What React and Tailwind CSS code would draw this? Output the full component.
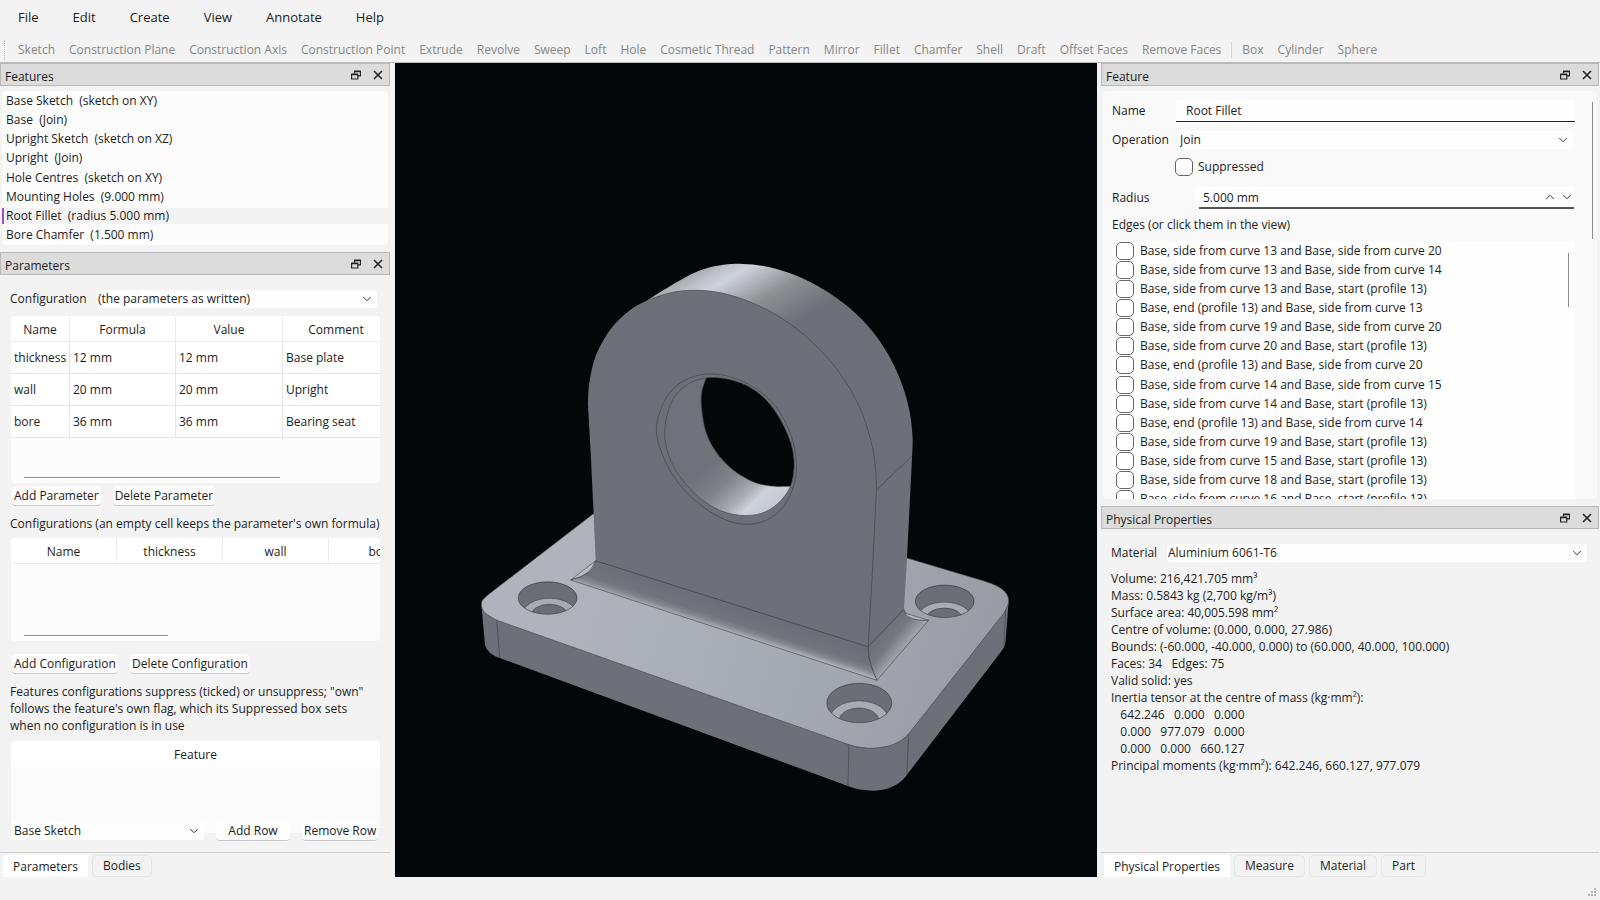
import React, { useId, useState } from "react";
import { ChevronDown, ChevronUp } from "lucide-react";

const MENUS = ["File", "Edit", "Create", "View", "Annotate", "Help"];

const TOOLS = [
  "Sketch", "Construction Plane", "Construction Axis", "Construction Point", "Extrude", "Revolve",
  "Sweep", "Loft", "Hole", "Cosmetic Thread", "Pattern", "Mirror", "Fillet", "Chamfer", "Shell",
  "Draft", "Offset Faces", "Remove Faces",
];
const PRIMITIVES = ["Box", "Cylinder", "Sphere"];

const FEATURES = [
  ["Base Sketch", "(sketch on XY)"],
  ["Base", "(Join)"],
  ["Upright Sketch", "(sketch on XZ)"],
  ["Upright", "(Join)"],
  ["Hole Centres", "(sketch on XY)"],
  ["Mounting Holes", "(9.000 mm)"],
  ["Root Fillet", "(radius 5.000 mm)"],
  ["Bore Chamfer", "(1.500 mm)"],
];

const PARAMETERS = [
  ["thickness", "12 mm", "12 mm", "Base plate"],
  ["wall", "20 mm", "20 mm", "Upright"],
  ["bore", "36 mm", "36 mm", "Bearing seat"],
];

const EDGES = [
  "Base, side from curve 13 and Base, side from curve 20",
  "Base, side from curve 13 and Base, side from curve 14",
  "Base, side from curve 13 and Base, start (profile 13)",
  "Base, end (profile 13) and Base, side from curve 13",
  "Base, side from curve 19 and Base, side from curve 20",
  "Base, side from curve 20 and Base, start (profile 13)",
  "Base, end (profile 13) and Base, side from curve 20",
  "Base, side from curve 14 and Base, side from curve 15",
  "Base, side from curve 14 and Base, start (profile 13)",
  "Base, end (profile 13) and Base, side from curve 14",
  "Base, side from curve 19 and Base, start (profile 13)",
  "Base, side from curve 15 and Base, start (profile 13)",
  "Base, side from curve 18 and Base, start (profile 13)",
  "Base, side from curve 16 and Base, start (profile 13)",
];

const PROPERTIES = `Volume: 216,421.705 mm³
Mass: 0.5843 kg (2,700 kg/m³)
Surface area: 40,005.598 mm²
Centre of volume: (0.000, 0.000, 27.986)
Bounds: (-60.000, -40.000, 0.000) to (60.000, 40.000, 100.000)
Faces: 34   Edges: 75
Valid solid: yes
Inertia tensor at the centre of mass (kg·mm²):
   642.246   0.000   0.000
   0.000   977.079   0.000
   0.000   0.000   660.127
Principal moments (kg·mm²): 642.246, 660.127, 977.079`;

/* ---------- 3D view ---------- */

// Catmull-Rom spline through the points, written as cubic segments
const curve = (pts, closed = false) => {
  const n = pts.length;
  const at = (i) => (closed ? pts[(i + n) % n] : pts[Math.max(0, Math.min(n - 1, i))]);
  let d = "";
  for (let i = 0; i < (closed ? n : n - 1); i++) {
    const [a, b, c, e] = [at(i - 1), at(i), at(i + 1), at(i + 2)];
    d += ` C${b[0] + (c[0] - a[0]) / 6} ${b[1] + (c[1] - a[1]) / 6} ${c[0] - (e[0] - b[0]) / 6} ${c[1] - (e[1] - b[1]) / 6} ${c[0]} ${c[1]}`;
  }
  return d;
};
const start = (p) => `M${p[0]} ${p[1]}`;

const FRONT_ARC = [
  [588, 405], [589.3, 383.3], [595.7, 356], [610, 330], [627.9, 311.7], [647.5, 300.2], [670.7, 292.7],
  [693.9, 290.3], [720.7, 292.8], [751, 302.3], [781.4, 318], [811.8, 341.7], [838.6, 371.5],
  [859, 406], [870.7, 440], [875.4, 466.7], [876.4, 490],
];
const BACK_ARC = [
  [647.5, 300.2], [660, 292.3], [677.9, 281.5], [693.9, 273], [710, 267.3], [727.9, 264.3], [743, 263.9],
  [763.6, 266], [788.6, 272.8], [813.6, 283.8], [842.1, 302], [867.1, 325], [886.8, 352], [901, 381.7],
  [909.3, 410], [912.5, 436.7], [912.1, 456],
];
const CHAMFER = [
  [656.4, 431.7], [661.8, 406.7], [673, 389], [688.6, 378.5], [708.2, 374], [731.4, 377], [756.4, 389],
  [776, 407], [790.4, 433.3], [796.4, 461.7], [793.9, 485], [784, 506], [767, 520], [745.7, 524.3],
  [724.3, 519.3], [702.9, 506.7], [681.4, 486.7], [665.4, 461.7],
];
const BORE = [
  [710, 377.6], [688.6, 383.8], [672.5, 400], [665, 426.7], [667.1, 450], [678, 474], [697.5, 496],
  [720.7, 510.7], [744.6, 515.5], [765, 512], [781.4, 500], [791.5, 483.3], [794, 460], [788.6, 436.7],
  [774.3, 410], [756.4, 391.5], [735, 381],
];
const BORE_BACK = [
  [707.1, 376], [701.8, 392], [701.8, 410], [706.4, 433.3], [717.1, 453.3], [733.2, 470], [752.9, 481.7],
  [770.7, 486], [789.3, 486.3],
];
const PLATE_LEFT = [[492, 591.7], [483.5, 599], [481.4, 605], [485, 612.7], [497, 620.3]];
const PLATE_FRONT = [[849, 744.7], [860, 747.3], [872.5, 748.2], [888.6, 746], [900, 741], [908.6, 734]];
const PLATE_RIGHT = [[1004, 613], [1008.6, 602], [1006, 593], [997, 586], [984, 581]];

const holes = [
  { x: 547.6, y: 598, rx: 29.4, ry: 16.2, fx: 549.5, floor: 614.5 },
  { x: 859.3, y: 703, rx: 32.5, ry: 19.7, fx: 859, floor: 720.5 },
  { x: 944.7, y: 601.3, rx: 29.4, ry: 16.2, fx: 944.3, floor: 618.3 },
];

const Viewport = () => (
  <svg viewBox="395 63 702 814" preserveAspectRatio="xMidYMid slice" className="block h-full w-full" role="img" aria-label="Bearing bracket">
    <defs>
      <linearGradient id="rim" gradientUnits="userSpaceOnUse" x1="731.5" y1="249.4" x2="779" y2="331">
        <stop offset="0" stopColor="#a6a9ae" />
        <stop offset=".12" stopColor="#bcc0c6" />
        <stop offset=".25" stopColor="#ced3dc" />
        <stop offset=".42" stopColor="#b0b3b8" />
        <stop offset=".62" stopColor="#8d8f93" />
        <stop offset="1" stopColor="#6d7077" />
      </linearGradient>
      <linearGradient id="wall" gradientUnits="userSpaceOnUse" x1="712" y1="465" x2="764" y2="520">
        <stop offset="0" stopColor="#6f7278" />
        <stop offset=".3" stopColor="#808388" />
        <stop offset=".58" stopColor="#a9acb1" />
        <stop offset=".74" stopColor="#cdd1d8" />
        <stop offset="1" stopColor="#c4c9d1" />
      </linearGradient>
      <linearGradient id="plate" gradientUnits="userSpaceOnUse" x1="560" y1="560" x2="1000" y2="700">
        <stop offset="0" stopColor="#b0b4ba" />
        <stop offset=".45" stopColor="#a8adb4" />
        <stop offset="1" stopColor="#989ba1" />
      </linearGradient>
      <linearGradient id="filletFront" gradientUnits="userSpaceOnUse" x1="732" y1="605" x2="724" y2="630">
        <stop offset="0" stopColor="#6c6f76" />
        <stop offset=".6" stopColor="#707379" />
        <stop offset=".82" stopColor="#85888d" />
        <stop offset="1" stopColor="#acafb4" />
      </linearGradient>
      <linearGradient id="filletSide" gradientUnits="userSpaceOnUse" x1="868" y1="647" x2="889.5" y2="665">
        <stop offset="0" stopColor="#6c6f76" />
        <stop offset=".5" stopColor="#75787d" />
        <stop offset="1" stopColor="#a0a3a8" />
      </linearGradient>
      <clipPath id="boreClip"><path d={start(BORE[0]) + curve(BORE, true)} /></clipPath>
      {holes.map((h, i) => (
        <clipPath id={`hole${i}`} key={i}><ellipse cx={h.x} cy={h.y} rx={h.rx} ry={h.ry} /></clipPath>
      ))}
    </defs>

    <g stroke="#3c3f43" strokeWidth=".6" strokeLinejoin="round">
      {/* base plate: sides, then top */}
      <path stroke="none" fill="#6d7077" d="M481.4 605 L485 645 Q487 653.5 499.6 658 L847.9 786 Q860 791 876 790.6 Q898 789 908.5 772.7 L1001 651.7 Q1005 647 1005.6 641 L1008.6 602 L870 640Z" />
      <path
        fill="url(#plate)"
        d={`M593 514 L492 591.7${curve(PLATE_LEFT)} L849 744.7${curve(PLATE_FRONT)} L1004 613${curve(PLATE_RIGHT)} L907 558Z`}
      />
      <path fill="none" d="M496.8 620.3 L499.6 657.7 M849 744.7 L847.9 786 M908.6 734 L906.8 775 M1005.7 610 L1003.9 646.5" />

      {/* counterbored mounting holes */}
      {holes.map((h, i) => (
        <g key={i}>
          <g clipPath={`url(#hole${i})`}>
            <ellipse cx={h.x} cy={h.y} rx={h.rx} ry={h.ry} fill="#6b6e74" />
            <ellipse cx={h.fx} cy={h.floor} rx={h.rx * 0.92} ry={h.ry} fill="#a8acb2" />
            <ellipse cx={h.fx} cy={h.floor} rx={h.rx * 0.61} ry={h.ry * 0.63} fill="#6b6e74" />
          </g>
          <ellipse cx={h.x} cy={h.y} rx={h.rx} ry={h.ry} fill="none" />
        </g>
      ))}

      {/* root fillet */}
      <path fill="#b9bdc4" d="M595.7 560.7 L570.7 580 Q590 576 595.7 560.7Z" />
      <path fill="url(#filletFront)" d="M595.7 560.7 Q595 574 570.7 580 L877 680.3 Q868 661 868.2 646.7Z" />
      <path fill="url(#filletSide)" d="M868.2 646.7 L903.9 609.3 Q906 621 928.6 620.3 L877 680.3 Q868 661 868.2 646.7Z" />
      <path fill="#b4b8be" d="M904.6 613 Q909 621 928.6 620.3Z" />

      {/* upright */}
      <path
        fill="url(#rim)"
        stroke="none"
        d={`${start(BACK_ARC[0])}${curve(BACK_ARC)} L906.4 570 L903.9 609.3 L868.2 646.7 L700 500Z`}
      />
      <path fill="#6d7077" stroke="none" d={`M588 405${curve(FRONT_ARC)} L872.5 570 L868.2 646.7 L595.7 560.7 L593.6 513.3 L590.7 453.3Z`} />
      <path fill="none" d={`M647.5 300.2${curve(FRONT_ARC.slice(5))} L872.5 570 L868.2 646.7 L595.7 560.7`} />
      <path fill="none" d="M876.4 490 L912.1 456 M868.2 646.7 L903.9 609.3" />

      {/* bore */}
      <path fill="#6d7077" d={start(CHAMFER[0]) + curve(CHAMFER, true) + "Z"} />
      <g clipPath="url(#boreClip)">
        <rect x="655" y="370" width="145" height="150" fill="url(#wall)" stroke="none" />
        <path fill="#03070a" d={`${start(BORE_BACK[0])}${curve(BORE_BACK)} L810 486 L810 365 L707 365Z`} />
      </g>
      <path fill="none" d={start(BORE[0]) + curve(BORE, true) + "Z"} />
    </g>
  </svg>
);

/* ---------- widgets ---------- */

const FloatIcon = () => (
  <svg viewBox="0 0 10 10" className="h-2.5 w-2.5" fill="none" stroke="#222" strokeLinejoin="round">
    <path d="M3.5 3.5V1.2h6v4.6H7M3.5 1.6h6" strokeWidth="1.2" />
    <path d="M.6 4.2h6.2v4.8H.6zM.6 4.7h6.2" strokeWidth="1.2" />
  </svg>
);

const CloseIcon = () => (
  <svg viewBox="0 0 10 10" className="h-2.5 w-2.5" fill="none" stroke="#222">
    <path d="M1 1l8 8M9 1l-8 8" strokeWidth="1.6" />
  </svg>
);

const DockTitle = ({ children }) => (
  <div className="flex h-[23px] shrink-0 items-center border border-[#b8b8b8] bg-[#dcdcdc] pl-1 pr-[5px]">
    <h2 className="flex-1 pt-1">{children}</h2>
    <button className="mr-2.5 flex h-3 w-3 items-center justify-center" aria-label={`Float ${children}`}><FloatIcon /></button>
    <button className="flex h-3 w-3 items-center justify-center" aria-label={`Close ${children}`}><CloseIcon /></button>
  </div>
);

const Select = ({ label, value, className, labelClass }) => {
  const id = useId();
  return (
    <>
      <label htmlFor={id} className={labelClass}>{label}</label>
      <div className={`relative ${className}`}>
        <select id={id} defaultValue={value} className="block h-[18px] w-full appearance-none rounded bg-[#fefefe] pl-px leading-[18px] outline-none">
          <option>{value}</option>
        </select>
        <ChevronDown className="pointer-events-none absolute right-[3px] top-0.5 h-3.5 w-3.5" strokeWidth={1.5} />
      </div>
    </>
  );
};

const PushButton = ({ children, className = "" }) => (
  <button className={`h-5 rounded border-b border-[#c8c8c8] bg-[#fdfdfd] px-0.5 leading-[18px] whitespace-nowrap ${className}`}>{children}</button>
);

const Tabs = ({ names, current, onSelect }) => (
  <div className="flex h-[25px] shrink-0 items-start gap-1 border-t border-[#cfcfcf] pl-[3px] pt-0.5" role="tablist">
    {names.map((name) => (
      <button
        key={name}
        role="tab"
        aria-selected={name === current}
        onClick={() => onSelect(name)}
        className={
          name === current
            ? "h-[22px] bg-white px-2.5 pt-px"
            : "h-[22px] rounded-sm border border-[#e6e6e6] px-2.5"
        }
      >
        {name}
      </button>
    ))}
  </div>
);

const CHECK = "h-[18px] w-[18px] shrink-0 appearance-none rounded-[5px] border border-[#666] bg-white checked:bg-[#9b4db5]";
const TH = "border-r border-b border-[#ececec] bg-white pt-0.5 font-normal";
const TD = "truncate border-r border-b border-[#e6e6e6] bg-white pl-[3px]";

/* ---------- docks ---------- */

const LeftDock = () => {
  const [selected, setSelected] = useState("Root Fillet");
  const [tab, setTab] = useState("Parameters");

  return (
    <aside className="mr-[5px] flex w-[390px] shrink-0 flex-col">
      <DockTitle>Features</DockTitle>
      <ul className="mx-0.5 mb-[7px] mt-[5px] flex h-[154px] flex-col rounded bg-[#fcfcfc]">
        {FEATURES.map(([name, note]) => (
          <li key={name} className="flex flex-1">
            <button
              onClick={() => setSelected(name)}
              className={
                name === selected
                  ? "flex h-4 w-full items-center self-center whitespace-pre border-l-2 border-[#a44cb8] bg-[#f3f3f3] pl-0.5"
                  : "flex w-full items-center whitespace-pre pl-1"
              }
            >
              {name}{"  "}{note}
            </button>
          </li>
        ))}
      </ul>

      <DockTitle>Parameters</DockTitle>
      <div className="flex flex-1 flex-col px-2.5">
        <div className="mt-3.5 flex h-5 items-center">
          <Select label="Configuration" value="(the parameters as written)" labelClass="w-[87px]" className="mr-[3px] flex-1" />
        </div>

        <div className="ml-px mt-[7px] flex h-[167px] flex-col overflow-hidden rounded bg-[#fcfcfc]">
          <table className="w-[480px] table-fixed border-separate border-spacing-0">
            <thead>
              <tr className="h-[26px]">
                <th className={`${TH} w-[59px]`}>Name</th>
                <th className={`${TH} w-[106px]`}>Formula</th>
                <th className={`${TH} w-[107px]`}>Value</th>
                <th className={`${TH} w-[107px]`}>Comment</th>
                <th className={TH}></th>
              </tr>
            </thead>
            <tbody>
              {PARAMETERS.map((row) => (
                <tr key={row[0]} className="h-8">
                  {row.map((cell, i) => (
                    <td key={i} className={TD}>{cell}</td>
                  ))}
                  <td className={TD}></td>
                </tr>
              ))}
            </tbody>
          </table>
          <div className="mb-[5px] ml-[13px] mt-auto h-px w-64 bg-[#8c8c8c]" />
        </div>
        <div className="mt-[3px] flex gap-3 pl-0.5">
          <PushButton>Add Parameter</PushButton>
          <PushButton>Delete Parameter</PushButton>
        </div>

        <p className="mt-[9px] whitespace-nowrap leading-[17px]">Configurations (an empty cell keeps the parameter's own formula)</p>
        <div className="ml-px mt-1.5 flex h-[103px] flex-col overflow-hidden rounded bg-[#fcfcfc]">
          <table className="w-[424px] table-fixed border-separate border-spacing-0">
            <thead>
              <tr className="h-[26px]">
                <th className={TH}>Name</th>
                <th className={TH}>thickness</th>
                <th className={TH}>wall</th>
                <th className={TH}>bore</th>
              </tr>
            </thead>
          </table>
          <div className="mb-[5px] ml-[13px] mt-auto h-px w-36 bg-[#8c8c8c]" />
        </div>
        <div className="mt-[13px] flex gap-3 pl-0.5">
          <PushButton>Add Configuration</PushButton>
          <PushButton>Delete Configuration</PushButton>
        </div>

        <p className="mt-[9px] whitespace-pre-line leading-[17px]">
          {`Features configurations suppress (ticked) or unsuppress; "own"
          follows the feature's own flag, which its Suppressed box sets
          when no configuration is in use`}
        </p>
        <div className="ml-px mt-[7px] h-[92px] shrink-0 overflow-hidden rounded bg-[#fbfbfb]">
          <table className="w-full">
            <thead>
              <tr className="h-[26px]"><th className="bg-white pt-0.5 font-normal">Feature</th></tr>
            </thead>
          </table>
        </div>
        <div className="relative -mt-3 flex h-5 items-center gap-3 pl-px">
          <Select label="Feature to add" value="Base Sketch" labelClass="sr-only" className="flex-1 rounded bg-[#fefefe] pl-0.5" />
          <PushButton className="w-[74px] shrink-0">Add Row</PushButton>
          <PushButton className="mr-0.5 w-[76px] shrink-0">Remove Row</PushButton>
        </div>
      </div>
      <Tabs names={["Parameters", "Bodies"]} current={tab} onSelect={setTab} />
    </aside>
  );
};

const FeatureForm = () => (
  <form className="mx-0.5 mt-[5px] flex h-[408px] shrink-0 overflow-hidden rounded bg-[#f9f9f9]" onSubmit={(e) => e.preventDefault()}>
    <div className="flex min-w-0 flex-1 flex-col pl-[9px] pr-[17px] pt-[9px]">
      <div className="flex h-[22px] shrink-0 items-center">
        <label htmlFor="name" className="w-16">Name</label>
        <input id="name" defaultValue="Root Fillet" className="h-[22px] min-w-0 flex-1 rounded-t border-b border-[#222] bg-[#fefefe] pl-2.5 outline-none" />
      </div>
      <div className="mt-2 flex h-5 shrink-0 items-center pr-0.5">
        <Select label="Operation" value="Join" labelClass="w-[67px]" className="flex-1" />
      </div>
      <div className="mt-2 flex h-[18px] shrink-0 items-center pl-[63px]">
        <input id="suppressed" type="checkbox" className={CHECK} />
        <label htmlFor="suppressed" className="pl-[5px]">Suppressed</label>
      </div>
      <div className="mt-[11px] flex h-[22px] shrink-0 items-center">
        <label htmlFor="radius" className="w-[83px]">Radius</label>
        <div className="flex h-[22px] min-w-0 flex-1 items-center rounded bg-[#fefefe] pl-1 pr-px">
          <input id="radius" defaultValue="5.000 mm" className="h-[22px] min-w-0 flex-1 border-b-2 border-[#555] pl-1 outline-none" />
          <div className="flex h-[22px] items-center gap-[3px] border-b-2 border-[#555]">
            <button aria-label="Increase radius"><ChevronUp className="h-3.5 w-3.5" strokeWidth={1.5} /></button>
            <button aria-label="Decrease radius"><ChevronDown className="h-3.5 w-3.5" strokeWidth={1.5} /></button>
          </div>
        </div>
      </div>
      <h3 className="mt-[7px] shrink-0 leading-[17px]">Edges (or click them in the view)</h3>
      <div className="mt-2 flex shrink-0 rounded bg-[#fefefe]">
        <ul className="flex h-[268px] flex-1 flex-col pl-1">
          {EDGES.map((edge, i) => (
            <li key={edge} className="flex flex-1 items-center">
              <input id={`edge-${i}`} type="checkbox" className={CHECK} />
              <label htmlFor={`edge-${i}`} className="whitespace-nowrap pl-1.5">{edge}</label>
            </li>
          ))}
        </ul>
        <div className="mr-1.5 mt-3 h-[54px] w-px bg-[#8c8c8c]" />
      </div>
    </div>
    <div className="mr-1 mt-[11px] h-[137px] w-px bg-[#8c8c8c]" />
  </form>
);

const RightDock = () => {
  const [tab, setTab] = useState("Physical Properties");

  return (
    <aside className="ml-1 mr-px flex w-[498px] shrink-0 flex-col">
      <DockTitle>Feature</DockTitle>
      <FeatureForm />
      <div className="h-[7px] shrink-0" />
      <DockTitle>Physical Properties</DockTitle>
      <div className="flex-1 px-2.5">
        <div className="mt-3.5 flex h-5 items-center pr-0.5">
          <Select label="Material" value="Aluminium 6061-T6" labelClass="w-14" className="flex-1" />
        </div>
        <p className="mt-[7px] whitespace-pre leading-[17px]">{PROPERTIES}</p>
      </div>
      <Tabs names={["Physical Properties", "Measure", "Material", "Part"]} current={tab} onSelect={setTab} />
    </aside>
  );
};

const App = () => (
  <div className='flex h-screen flex-col overflow-hidden bg-[#f3f3f3] font-["Open_Sans","Noto_Sans",sans-serif] text-[12px] leading-4 text-[#1c1c1c]'>
    <nav className="flex h-[34px] shrink-0 items-center gap-[34px] pl-[18px] text-[13px]">
      {MENUS.map((menu) => (
        <button key={menu}>{menu}</button>
      ))}
    </nav>
    <div className="flex h-[29px] shrink-0 items-center gap-3.5 border-b border-[#bcbcbc] pl-1 pt-[3px] text-[#868686]" role="toolbar">
      <div className="-mr-px h-5 border-l border-dotted border-[#c0c0c0]" />
      {TOOLS.map((tool) => (
        <button key={tool} className="whitespace-nowrap">{tool}</button>
      ))}
      <div className="-mx-1 h-4 w-px bg-[#d4d4d4]" />
      {PRIMITIVES.map((tool) => (
        <button key={tool}>{tool}</button>
      ))}
    </div>

    <main className="flex min-h-0 flex-1">
      <LeftDock />
      <section className="min-w-0 flex-1 bg-[#03070a]">
        <Viewport />
      </section>
      <RightDock />
    </main>

    <footer className="flex h-[23px] shrink-0 items-end justify-end p-[3px]">
      <svg viewBox="0 0 9 9" className="h-[9px] w-[9px]" fill="#b4b4b4">
        <path d="M6 0h2v2h-2zM3 3h2v2h-2zM6 3h2v2h-2zM0 6h2v2h-2zM3 6h2v2h-2zM6 6h2v2h-2z" />
      </svg>
    </footer>
  </div>
);

export default App;
